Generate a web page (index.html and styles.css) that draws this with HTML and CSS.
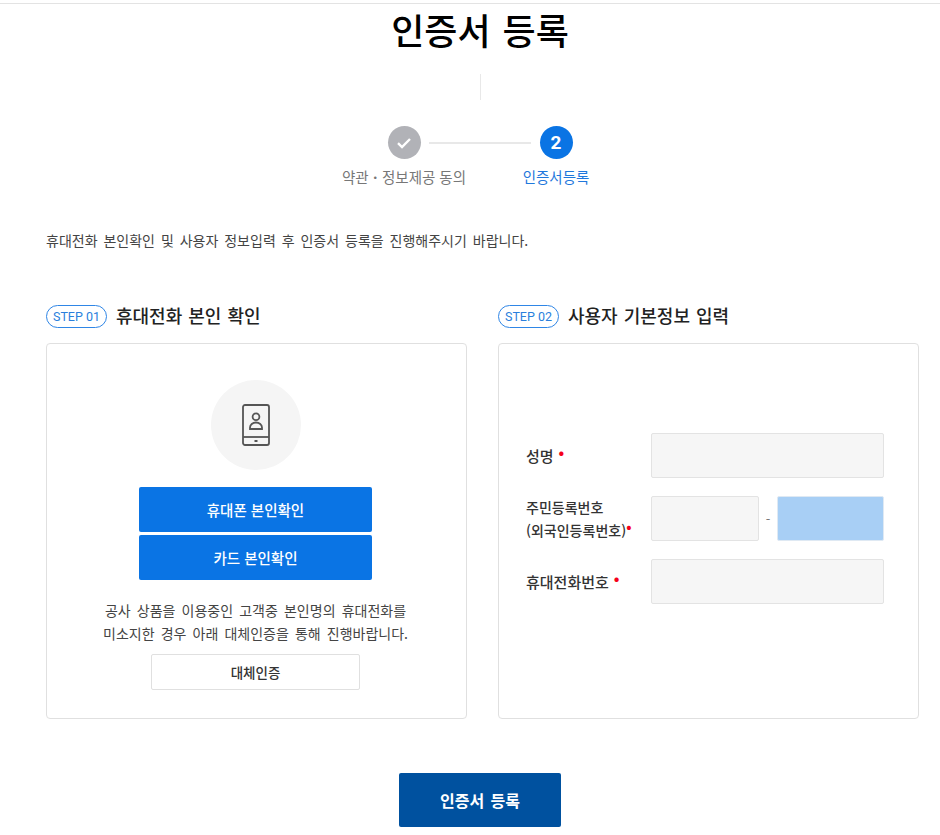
FILE: index.html
```html
<!DOCTYPE html>
<html lang="ko">
  <head>
    <meta charset="UTF-8" />
    <title>인증서 등록</title>
    <link rel="stylesheet" href="styles.css">
  </head>
  <body>
    <div class="page">
      <h1 class="page-title">인증서 등록</h1>
      <div class="title-divider"></div>

      <div class="steps">
        <div class="step">
          <div class="step-circle done">
            <svg width="16" height="12" viewBox="0 0 16 12"><path d="M2 6.2 L6 10 L14 2" fill="none" stroke="#fff" stroke-width="2.4"/></svg>
          </div>
          <div class="step-label">약관<b>ㆍ</b>정보제공 동의</div>
        </div>
        <div class="step-line"></div>
        <div class="step">
          <div class="step-circle active">2</div>
          <div class="step-label active-label">인증서등록</div>
        </div>
      </div>

      <p class="intro">휴대전화 본인확인 및 사용자 정보입력 후 인증서 등록을 진행해주시기 바랍니다.</p>

      <div class="columns">
        <section class="column">
          <h2 class="section-title"><span class="badge">STEP 01</span>휴대전화 본인 확인</h2>
          <div class="card card-verify">
            <div class="phone-circle">
              <svg width="30" height="44" viewBox="0 0 30 44" fill="none" stroke="#555" stroke-width="1.8">
                <rect x="2" y="2" width="26" height="40" rx="2"/>
                <path d="M2 34 H28"/>
                <circle cx="15" cy="13.7" r="3.4"/>
                <path d="M9 26 V24.5 a6 5 0 0 1 12 0 V26 Z"/>
                <path d="M13.5 38 H16.5" stroke-width="2"/>
              </svg>
            </div>
            <button class="btn-blue">휴대폰 본인확인</button>
            <button class="btn-blue">카드 본인확인</button>
            <p class="notice">공사 상품을 이용중인 고객중 본인명의 휴대전화를<br>미소지한 경우 아래 대체인증을 통해 진행바랍니다.</p>
            <button class="btn-outline">대체인증</button>
          </div>
        </section>

        <section class="column">
          <h2 class="section-title"><span class="badge">STEP 02</span>사용자 기본정보 입력</h2>
          <div class="card card-form">
            <div class="form-row">
              <label class="form-label big">성명<span class="req">•</span></label>
              <div class="field"></div>
            </div>
            <div class="form-row">
              <label class="form-label">주민등록번호<br><span class="sub-label">(외국인등록번호)</span><span class="req tight">•</span></label>
              <div class="field small"></div>
              <span class="dash">-</span>
              <div class="field filled"></div>
            </div>
            <div class="form-row">
              <label class="form-label big">휴대전화번호<span class="req">•</span></label>
              <div class="field"></div>
            </div>
          </div>
        </section>
      </div>

      <div class="submit-wrap">
        <button class="btn-submit">인증서 등록</button>
      </div>
    </div>
  </body>
</html>
```

FILE: styles.css
```css
html, body {
  margin: 0;
  padding: 0;
}

body {
  background: #fff;
  color: #222;
  font-family: "Noto Sans CJK KR", "Noto Sans", sans-serif;
  overflow: hidden;
}

button {
  font-family: inherit;
  cursor: pointer;
}

.page {
  height: 835px;
  border-top: 1px solid #e3e3e3;
  margin-top: 3px;
  box-sizing: border-box;
  padding: 0 21px 0 46px;
}

.page-title {
  margin: -1px 0 0 -5px;
  font-size: 36px;
  line-height: 52px;
  font-weight: 500;
  word-spacing: 2px;
  color: #000;
  text-align: center;
}

.title-divider {
  width: 1px;
  height: 26px;
  margin: 19px 0 0 434px;
  background: #e8e8e8;
}

.steps {
  display: flex;
  justify-content: center;
  align-items: flex-start;
  margin: 26px 0 0 -5px;
}

.step {
  width: 130px;
  display: flex;
  flex-direction: column;
  align-items: center;
}

.step-circle {
  width: 33px;
  height: 33px;
  border-radius: 50%;
  display: flex;
  align-items: center;
  justify-content: center;
  color: #fff;
  font-family: Roboto, sans-serif;
  font-size: 19px;
  font-weight: 700;
}

.step-circle.done {
  background: #b1b2b7;
}

.step-circle.active {
  background: #0a74e4;
}

.step-label {
  margin-top: 8px;
  font-size: 14.5px;
  line-height: 20px;
  color: #777;
  white-space: nowrap;
}

.active-label {
  color: #1f78dc;
}

.step-line {
  width: 102px;
  height: 2px;
  margin: 16px -40px 0;
  background: #e8e8e8;
}

.intro {
  margin: 43px 0 0;
  font-size: 14px;
  line-height: 20px;
  word-spacing: 2px;
  color: #444;
}

.columns {
  display: flex;
  gap: 31px;
  margin-top: 51px;
}

.column {
  width: 421px;
}

.section-title {
  display: flex;
  align-items: center;
  gap: 9px;
  margin: 0 0 14px;
  height: 28px;
  font-size: 18px;
  font-weight: 500;
  word-spacing: 1px;
  color: #222;
}

.badge {
  display: inline-flex;
  align-items: center;
  justify-content: center;
  box-sizing: border-box;
  width: 61px;
  height: 23px;
  margin-top: 2px;
  border: 1px solid #2f86e6;
  border-radius: 12px;
  font-family: Roboto, sans-serif;
  font-size: 12.5px;
  font-weight: 400;
  word-spacing: 0;
  color: #2a7fdc;
}

.card {
  box-sizing: border-box;
  height: 376px;
  border: 1px solid #e0e0e0;
  border-radius: 4px;
}

.card-verify {
  display: flex;
  flex-direction: column;
  align-items: center;
  padding: 36px 2px 0 0;
}

.phone-circle {
  width: 90px;
  height: 90px;
  border-radius: 50%;
  background: #f5f5f5;
  display: flex;
  align-items: center;
  justify-content: center;
  margin-bottom: 17px;
}

.btn-blue {
  width: 233px;
  height: 45px;
  margin-bottom: 3px;
  border: 0;
  border-radius: 2px;
  background: #0a74e4;
  color: #fff;
  font-size: 14.5px;
  font-weight: 500;
}

.notice {
  margin: 16px 0 0;
  font-size: 14px;
  line-height: 23px;
  word-spacing: 2.2px;
  color: #444;
  text-align: center;
}

.btn-outline {
  width: 209px;
  height: 36px;
  margin-top: 9px;
  border: 1px solid #e0e0e0;
  border-radius: 2px;
  background: #fff;
  color: #333;
  font-size: 13.5px;
  font-weight: 500;
}

.card-form {
  padding: 89px 34px 0 27px;
}

.form-row {
  display: flex;
  align-items: center;
  height: 45px;
  margin-bottom: 18px;
}

.form-label {
  width: 125px;
  flex-shrink: 0;
  font-size: 14px;
  font-weight: 500;
  line-height: 23px;
  color: #333;
}

.form-label.big {
  font-size: 15px;
}

.sub-label {
  font-size: 14px;
}

.req {
  color: #f5001a;
  margin-left: 5px;
  font-weight: 700;
  position: relative;
  top: -4px;
}

.req.tight {
  margin-left: 0;
}

.field {
  box-sizing: border-box;
  flex: 1;
  height: 45px;
  border: 1px solid #e3e3e3;
  border-radius: 2px;
  background: #f6f6f6;
}

.field.small {
  flex: none;
  width: 108px;
}

.field.filled {
  border-color: #dfe9f3;
  background: #a8cff5;
}

.dash {
  width: 18px;
  text-align: center;
  font-size: 13px;
  color: #777;
}

.submit-wrap {
  display: flex;
  justify-content: center;
  margin: 54px 0 0 -5px;
}

.btn-submit {
  width: 162px;
  height: 54px;
  border: 0;
  border-radius: 2px;
  background: #00519f;
  color: #fff;
  font-size: 16px;
  font-weight: 700;
  word-spacing: 2px;
}
```
